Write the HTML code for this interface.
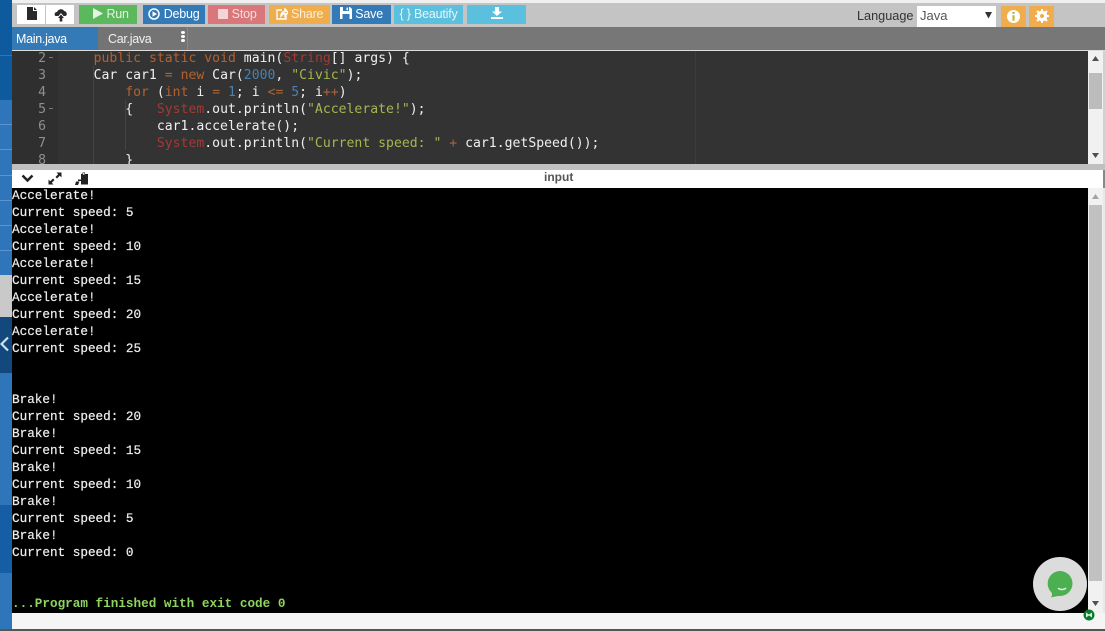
<!DOCTYPE html>
<html><head><meta charset="utf-8">
<style>
html,body{margin:0;padding:0;width:1105px;height:631px;overflow:hidden;background:#fff;font-family:"Liberation Sans",sans-serif}
.a{position:absolute}
.b{position:absolute;top:5px;height:19px;color:#fff;font-size:12.5px;line-height:19px;text-align:center;white-space:nowrap;letter-spacing:-.2px}
.code{position:absolute;font:13.1px/17px "DejaVu Sans Mono",monospace;letter-spacing:.02px;color:#f0f0f0;white-space:pre}
.n{position:absolute;left:8px;width:26px;text-align:right;font:13.1px/17px "DejaVu Sans Mono",monospace;color:#8f908a}
.k{color:#b5622f}.r{color:#a33a34}.o{color:#a8643a}.v{color:#4d80ad}.s{color:#a5b84f}
.l{position:absolute;left:0;width:12px;height:1px;background:#5a95cf}
#out{position:absolute;left:12px;top:187px;font:12.67px/17px "Liberation Mono",monospace;color:#eee;white-space:pre;-webkit-text-stroke:.2px #eee}
</style></head><body>
<!-- sidebar -->
<div class="a" style="left:0;top:0;width:12px;height:631px;background:#2f75b9"></div>
<div class="a" style="left:0;top:0;width:12px;height:100px;background:#0d5a9e"></div>
<div class="a" style="left:0;top:55px;width:12px;height:1px;background:#2f75b9"></div>
<div class="l" style="top:124px"></div>
<div class="l" style="top:149px"></div>
<div class="l" style="top:175px"></div>
<div class="l" style="top:200px"></div>
<div class="l" style="top:225px"></div>
<div class="l" style="top:250px"></div>
<div class="a" style="left:0;top:275px;width:12px;height:42px;background:#c9c9c9"></div>
<div class="a" style="left:0;top:317px;width:12px;height:56px;background:#12487c"></div>
<div class="a" style="left:0;top:505px;width:12px;height:68px;background:#155ea6"></div>
<svg class="a" style="left:0;top:336px" width="10" height="16"><path d="M8 1.5 L1.5 8 L8 14.5" fill="none" stroke="#cfe0f0" stroke-width="2.2"/></svg>
<!-- toolbar -->
<div class="a" style="left:12px;top:3px;width:1093px;height:24px;background:#c4c4c4"></div>
<div class="a" style="left:12px;top:0;width:1093px;height:3px;background:#f0f0f0"></div>
<div class="a" style="left:17px;top:5px;width:28px;height:19px;background:#fff"></div>
<div class="a" style="left:46px;top:5px;width:28px;height:19px;background:#fff"></div>
<svg class="a" style="left:26px;top:7px" width="12" height="14"><path d="M1 0H7V4H11V13H1Z M8 0L11 3H8Z" fill="#2a2a2a"/></svg>
<svg class="a" style="left:54px;top:8px" width="14" height="14"><path d="M2 8 C0 8 0 4 3 4 C4 1 9 0 10 3 C13 3 14 8 11 8 H9.5 L7 5 L4.5 8Z M7 6.5 L10 10 H8.3 V13.5 H5.7 V10 H4Z" fill="#2a2a2a"/></svg>
<div class="b" style="left:79px;width:58px;box-sizing:border-box;padding-left:6px;background:#5cb85c;color:#e4f4e4"><svg width="10" height="11" style="vertical-align:-1px"><path d="M0 0L10 5.5L0 11Z" fill="#e4f4e4"/></svg> Run</div>
<div class="b" style="left:143px;width:62px;background:#337ab7"><svg width="12" height="12" style="vertical-align:-2px"><circle cx="6" cy="6" r="5" fill="none" stroke="#fff" stroke-width="1.5"/><path d="M4.5 3.2L9 6L4.5 8.8Z" fill="#fff"/></svg> Debug</div>
<div class="b" style="left:208px;width:57px;box-sizing:border-box;padding-left:2px;background:#d9777a;color:#f6dede"><svg width="10" height="10" style="vertical-align:-1px"><rect width="10" height="10" fill="#f3d5d5"/></svg> Stop</div>
<div class="b" style="left:269px;width:61px;background:#f0ad4e;color:#fbeeda"><svg width="12" height="12" style="vertical-align:-2px"><path d="M10 7.5V11H1V2H6M5 8C5 5 7 3.5 9 3.5V1L12 4.5L9 8V5.5C7 5.5 6 6.5 5 8Z" fill="none" stroke="#fff" stroke-width="1.4"/></svg> Share</div>
<div class="b" style="left:332px;width:59px;background:#337ab7"><svg width="12" height="12" style="vertical-align:-1px"><path d="M0 0H10L12 2V12H0Z" fill="#fff"/><rect x="3" y="0" width="6" height="4" fill="#337ab7"/><rect x="6.5" y=".6" width="1.5" height="2.6" fill="#fff"/><rect x="2.5" y="7" width="7" height="5" fill="#337ab7"/></svg> Save</div>
<div class="b" style="left:394px;width:69px;background:#5bc0de;color:#e8f6fb">{ } Beautify</div>
<div class="b" style="left:467px;width:59px;background:#5bc0de"><svg width="12" height="12" style="vertical-align:-1px"><path d="M4 0H8V4.5H11L6 9L1 4.5H4Z M0 10H12V12H0Z" fill="#fff"/></svg></div>
<div class="a" style="left:857px;top:8px;font-size:12.7px;line-height:17px;color:#333">Language</div>
<div class="a" style="left:917px;top:6px;width:79px;height:21px;background:#fff;font-size:13px;line-height:20px;color:#555;text-indent:3px">Java</div>
<svg class="a" style="left:985px;top:12px" width="7" height="7"><path d="M0 0H7L3.5 6.5Z" fill="#333"/></svg>
<div class="a" style="left:1001px;top:6px;width:25px;height:21px;background:#f0ad4e"></div>
<svg class="a" style="left:1006px;top:9px" width="15" height="15"><circle cx="7.500" cy="7.500" r="6.500" fill="#fff"/><rect x="6.400" y="3" width="2.200" height="2" fill="#c9b33a"/><rect x="6.400" y="6.200" width="2.200" height="5.500" fill="#c9b33a"/></svg>
<div class="a" style="left:1029px;top:6px;width:25px;height:21px;background:#f0ad4e"></div>
<svg class="a" style="left:1035px;top:9px" width="14" height="14"><circle cx="7" cy="7" r="3.800" fill="none" stroke="#fff" stroke-width="3"/><path d="M7 0V14M0 7H14M2 2L12 12M12 2L2 12" stroke="#fff" stroke-width="2"/><circle cx="7" cy="7" r="2" fill="#f0ad4e"/></svg>
<!-- tabs -->
<div class="a" style="left:12px;top:27px;width:1093px;height:23px;background:#777"></div>
<div class="a" style="left:12px;top:27px;width:86px;height:23px;background:#337ab7"></div>
<div class="a" style="left:98px;top:27px;width:90px;height:23px;background:#747474;border-right:1px solid #888;box-sizing:border-box"></div>
<div class="a" style="left:16px;top:31px;font-size:12.500px;line-height:16px;color:#fff;letter-spacing:-.3px">Main.java</div>
<div class="a" style="left:108px;top:31px;font-size:12.500px;line-height:16px;color:#f2f2f2;letter-spacing:-.3px">Car.java</div>
<div class="a" style="left:181px;top:31px;width:4px;height:3px;background:#fff;box-shadow:0 4px #fff,0 8px #fff;border-radius:50%"></div>
<div class="a" style="left:12px;top:50px;width:1093px;height:1px;background:#ddd"></div>
<!-- editor -->
<div class="a" style="left:12px;top:51px;width:1076px;height:113px;background:#333;overflow:hidden">
 <div class="a" style="left:0;top:0;width:46px;height:113px;background:#2f2f2f"></div>
 <div class="a" style="left:683px;top:0;width:1px;height:113px;background:#3d3d3d"></div>
 <div class="a" style="left:81px;top:15px;width:1px;height:98px;background:#444"></div>
 <div class="a" style="left:113px;top:49px;width:1px;height:50px;background:#444"></div>
</div>
<div class="a" style="left:12px;top:51px;width:1076px;height:113px;overflow:hidden">
 <div class="n" style="top:-1px">2</div><div class="n" style="top:16px">3</div><div class="n" style="top:33px">4</div><div class="n" style="top:50px">5</div><div class="n" style="top:67px">6</div><div class="n" style="top:84px">7</div><div class="n" style="top:101px">8</div>
 <div class="a" style="left:37px;top:6px;width:4px;height:1px;background:#777"></div>
 <div class="a" style="left:37px;top:57px;width:4px;height:1px;background:#777"></div>
 <div class="code" style="left:50px;top:-1px">    <span class="k">public</span> <span class="k">static</span> <span class="k">void</span> main(<span class="r">String</span>[] args) {</div>
 <div class="code" style="left:50px;top:16px">    Car car1 <span class="o">=</span> <span class="k">new</span> Car(<span class="v">2000</span>, <span class="s">"Civic"</span>);</div>
 <div class="code" style="left:50px;top:33px">        <span class="k">for</span> (<span class="k">int</span> i <span class="o">=</span> <span class="v">1</span>; i <span class="o">&lt;=</span> <span class="v">5</span>; i<span class="o">++</span>)</div>
 <div class="code" style="left:50px;top:50px">        {   <span class="r">System</span>.out.println(<span class="s">"Accelerate!"</span>);</div>
 <div class="code" style="left:50px;top:67px">            car1.accelerate();</div>
 <div class="code" style="left:50px;top:84px">            <span class="r">System</span>.out.println(<span class="s">"Current speed: "</span> <span class="o">+</span> car1.getSpeed());</div>
 <div class="code" style="left:50px;top:101px">        }</div>
</div>
<!-- editor scrollbar -->
<div class="a" style="left:1088px;top:51px;width:15px;height:113px;background:#f1f1f1"></div>
<div class="a" style="left:1089px;top:73px;width:13px;height:36px;background:#bcbcbc"></div>
<svg class="a" style="left:1092px;top:56px" width="7" height="5"><path d="M0 5L3.500 0L7 5Z" fill="#505050"/></svg>
<svg class="a" style="left:1092px;top:153px" width="7" height="5"><path d="M0 0L3.500 5L7 0Z" fill="#505050"/></svg>
<div class="a" style="left:1103px;top:51px;width:2px;height:113px;background:#d0d0d0"></div>
<!-- input bar -->
<div class="a" style="left:12px;top:164px;width:1093px;height:6px;background:#c0c0c0"></div>
<div class="a" style="left:12px;top:170px;width:1091px;height:18px;background:#fff"></div>
<div class="a" style="left:1103px;top:170px;width:2px;height:18px;background:#888"></div>
<div class="a" style="left:544px;top:170px;font-size:12px;line-height:14px;font-weight:bold;color:#555">input</div>
<svg class="a" style="left:21px;top:174px" width="13" height="9"><path d="M1.500 1.500L6.500 6.500L11.500 1.500" fill="none" stroke="#222" stroke-width="2.500"/></svg>
<svg class="a" style="left:48px;top:172px" width="14" height="13"><path d="M8.500 0.500H13.500V5.500L11.800 3.800L9 6.500L7.500 5L10.200 2.200Z M0.500 12.500V7.500L2.200 9.200L5 6.500L6.500 8L3.800 10.800L5.500 12.500Z" fill="#222"/></svg>
<svg class="a" style="left:75px;top:172px" width="14" height="14"><path d="M6 2H7.500V0.500H10V2H13V12.500H6V9H3V7.500H6Z" fill="#222"/><rect x="8" y="1.200" width="1.500" height="1.500" fill="#fff"/><path d="M1 9.500H4.500L3 13H0Z" fill="#222"/></svg>
<!-- output -->
<div class="a" style="left:12px;top:188px;width:1076px;height:425px;background:#000"></div>
<div id="out">Accelerate!
Current speed: 5
Accelerate!
Current speed: 10
Accelerate!
Current speed: 15
Accelerate!
Current speed: 20
Accelerate!
Current speed: 25


Brake!
Current speed: 20
Brake!
Current speed: 15
Brake!
Current speed: 10
Brake!
Current speed: 5
Brake!
Current speed: 0


<b style="color:#8fd45f;-webkit-text-stroke:0">...Program finished with exit code 0</b></div>
<!-- output scrollbar -->
<div class="a" style="left:1088px;top:188px;width:15px;height:425px;background:#f1f1f1"></div>
<div class="a" style="left:1089px;top:205px;width:13px;height:376px;background:#c1c1c1"></div>
<svg class="a" style="left:1092px;top:194px" width="7" height="5"><path d="M0 5L3.500 0L7 5Z" fill="#a3a3a3"/></svg>
<svg class="a" style="left:1092px;top:601px" width="7" height="5"><path d="M0 0L3.500 5L7 0Z" fill="#505050"/></svg>
<div class="a" style="left:1103px;top:188px;width:2px;height:425px;background:#e8e8e8"></div>
<!-- bottom -->
<div class="a" style="left:12px;top:613px;width:1093px;height:16px;background:#f5f5f5"></div>
<div class="a" style="left:0;top:629px;width:1105px;height:2px;background:#555"></div>
<div class="a" style="left:1033px;top:557px;width:54px;height:54px;border-radius:50%;background:#dcdcdc"></div>
<svg class="a" style="left:1047px;top:570px" width="26" height="28"><path d="M13 1A12.500 12.500 0 1 1 13 26C10 26 8 26.500 4 27.500C5 26 5.500 24 4.500 22.500A12.500 12.500 0 0 1 13 1Z" fill="#4caf50"/><path d="M11 18C13 20 17 20 19 18" fill="none" stroke="#dff2df" stroke-width="1.500"/></svg>
<svg class="a" style="left:1083px;top:609px" width="12" height="12"><circle cx="6" cy="6" r="5.500" fill="#0c7a2c"/><path d="M3 3.500L6 5.500L9 3.500V8.500L6 6.500L3 8.500Z" fill="#d6f0dc"/></svg>
</body></html>
